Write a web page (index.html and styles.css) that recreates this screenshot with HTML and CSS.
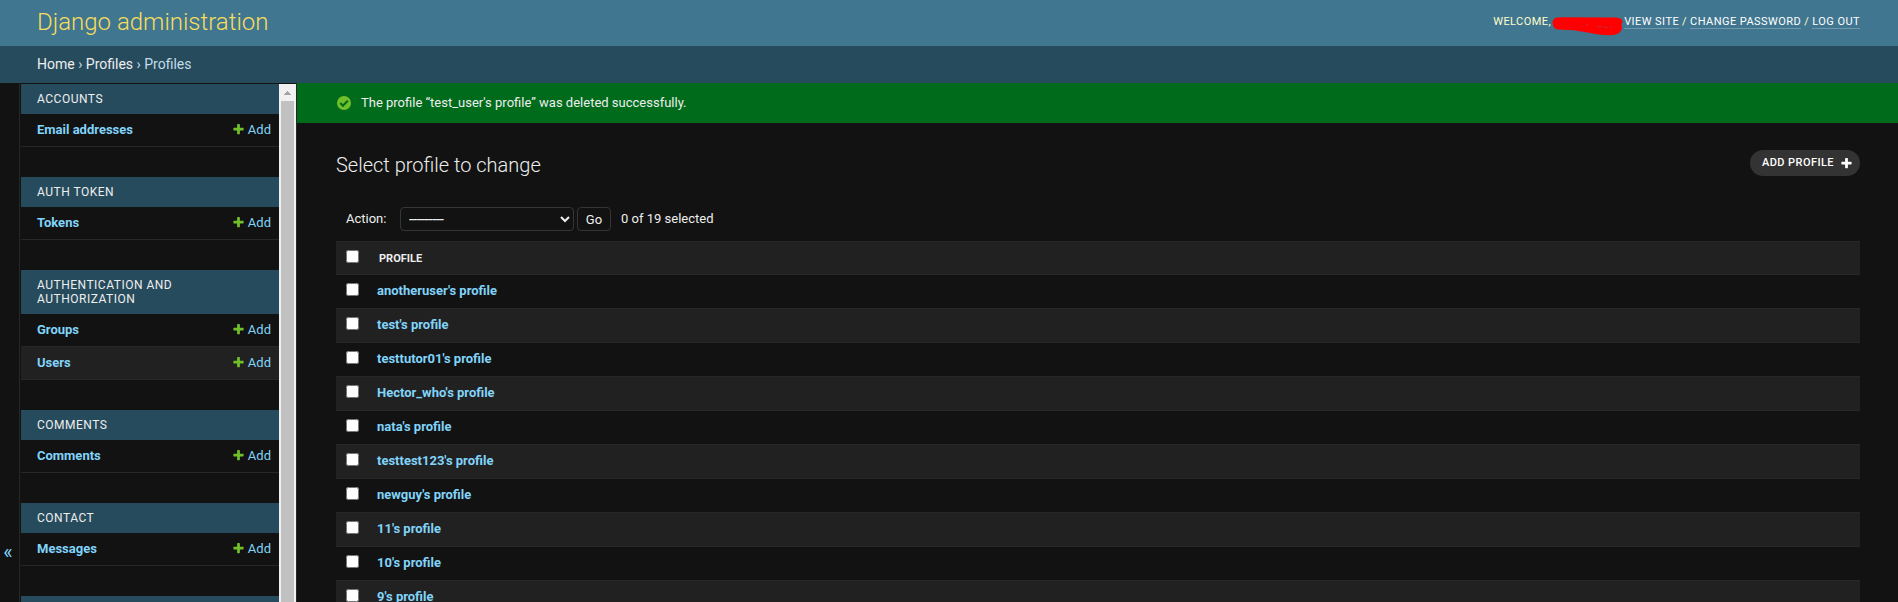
FILE: index.html
```
<!DOCTYPE html>
<html lang="en">
<head>
<meta charset="utf-8">
<title>Select profile to change | Django administration</title>
<link rel="stylesheet" href="styles.css">
</head>
<body>
<svg class="defs" width="0" height="0" aria-hidden="true">
  <symbol id="plus" viewBox="0 0 1792 1792"><path d="M1600 736v192q0 40-28 68t-68 28h-416v416q0 40-28 68t-68 28h-192q-40 0-68-28t-28-68v-416h-416q-40 0-68-28t-28-68v-192q0-40 28-68t68-28h416v-416q0-40 28-68t68-28h192q40 0 68 28t28 68v416h416q40 0 68 28t28 68z"/></symbol>
</svg>
<header class="header">
  <h1 class="brand">Django administration</h1>
  <div class="user-tools">
    <span>WELCOME,</span>
    <svg class="redacted" width="71" height="19" viewBox="0 0 71 19"><path fill="#f00" d="M3 1.2Q5 .2 10 .3L64 .4Q71 1 70.5 5Q69 7.500 70 10Q70.500 17 60 18.200Q50 18.500 38 16L22 13.200L6 12.500Q2 12 1 8Q-.5 3 3 1.200Z"/><path stroke="#a83c48" stroke-width=".8" fill="none" d="M34 7.700h2M45 9.500l5 .3m2 .4h4m2-.2h2"/></svg>
    <a>VIEW SITE</a> <span>/</span> <a>CHANGE PASSWORD</a> <span>/</span> <a>LOG OUT</a>
  </div>
</header>
<nav class="breadcrumbs"><a>Home</a> › <a>Profiles</a> › Profiles</nav>
<div class="main">
  <button class="toggle" aria-label="Toggle navigation">«</button>
  <nav class="sidebar">
    <div class="modules">
      <section class="module"><h2>ACCOUNTS</h2>
        <div class="model"><b>Email addresses</b><a><svg><use href="#plus"/></svg>Add</a></div></section>
      <section class="module"><h2>AUTH TOKEN</h2>
        <div class="model"><b>Tokens</b><a><svg><use href="#plus"/></svg>Add</a></div></section>
      <section class="module"><h2>AUTHENTICATION AND<br>AUTHORIZATION</h2>
        <div class="model"><b>Groups</b><a><svg><use href="#plus"/></svg>Add</a></div>
        <div class="model"><b>Users</b><a><svg><use href="#plus"/></svg>Add</a></div></section>
      <section class="module"><h2>COMMENTS</h2>
        <div class="model"><b>Comments</b><a><svg><use href="#plus"/></svg>Add</a></div></section>
      <section class="module"><h2>CONTACT</h2>
        <div class="model"><b>Messages</b><a><svg><use href="#plus"/></svg>Add</a></div></section>
      <section class="module"><h2></h2></section>
    </div>
    <div class="scrollbar">
      <svg width="17" height="17" shape-rendering="crispEdges"><path fill="#a3a3a3" d="M8 7h1v1h1v1h1v1h1v1H5v-1h1V9h1V8h1z"/></svg>
      <div class="thumb"></div>
    </div>
  </nav>
  <div class="content">
    <div class="success"><svg width="14" height="14" viewBox="0 0 14 14"><circle cx="7" cy="7" r="7" fill="#70bf2b"/><path d="M3.300 7.100l2.600 2.600 4.900-4.900" fill="none" stroke="#006b1b" stroke-width="2.100"/></svg><span>The profile “test_user's profile” was deleted successfully.</span></div>
    <div class="page">
      <div class="title-row"><h2>Select profile to change</h2><a class="add">ADD PROFILE<svg><use href="#plus"/></svg></a></div>
      <div class="actions">
        <label for="action">Action:</label>
        <select id="action"><option>---------</option></select>
        <button>Go</button>
        <span>0 of 19 selected</span>
      </div>
      <div class="results">
        <div class="row head"><input type="checkbox"><span>PROFILE</span></div>
        <div class="row"><input type="checkbox"><a>anotheruser's profile</a></div>
        <div class="row"><input type="checkbox"><a>test's profile</a></div>
        <div class="row"><input type="checkbox"><a>testtutor01's profile</a></div>
        <div class="row"><input type="checkbox"><a>Hector_who's profile</a></div>
        <div class="row"><input type="checkbox"><a>nata's profile</a></div>
        <div class="row"><input type="checkbox"><a>testtest123's profile</a></div>
        <div class="row"><input type="checkbox"><a>newguy's profile</a></div>
        <div class="row"><input type="checkbox"><a>11's profile</a></div>
        <div class="row"><input type="checkbox"><a>10's profile</a></div>
        <div class="row"><input type="checkbox"><a>9's profile</a></div>
      </div>
    </div>
  </div>
</div>
</body>
</html>
```
FILE: styles.css
```
:root {
  --primary: #264b5d;
  --body-bg: #121212;
  --body-fg: #eeeeee;
  --darkened: #212121;
  --hairline: #272727;
  --border: #353535;
  --link: #81d4fa;
}
* { box-sizing: border-box; }
body {
  margin: 0;
  height: 602px;
  display: flex;
  flex-direction: column;
  overflow: hidden;
  background: var(--body-bg);
  color: var(--body-fg);
  font: 13px/17px Roboto, "Liberation Sans", sans-serif;
}
h1, h2 { margin: 0; }
.defs { position: absolute; }
.header {
  flex: none;
  height: 46px;
  padding: 0 38px 3px 37px;
  display: flex;
  align-items: center;
  justify-content: space-between;
  background: #417690;
  color: #ffffcc;
}
.brand { padding-top: 1px; font-size: 24px; line-height: 28px; font-weight: 300; color: #f5dd5d; }
.user-tools {
  display: flex;
  align-items: flex-start;
  gap: 3px;
  height: 13px;
  font-size: 11px;
  line-height: 13px;
  letter-spacing: 0.45px;
}
.user-tools a { height: 14px; color: #fff; border-bottom: 1px solid rgba(255, 255, 255, 0.25); }
.redacted { flex: none; margin: 2px -2px 0 -2px; }
.breadcrumbs {
  flex: none;
  height: 37px;
  padding: 10px 37px;
  background: var(--primary);
  color: #c4dce8;
  font-size: 14px;
}
.breadcrumbs a { color: #eee; }
.main { flex: 1; min-height: 0; display: flex; }
.toggle {
  flex: none;
  width: 20px;
  padding: 418px 3px 0 0;
  border: 0;
  border-right: 1px solid var(--hairline);
  background: none;
  color: var(--link);
  font: 20px Roboto, sans-serif;
}
.sidebar {
  flex: none;
  width: 277px;
  padding: 1px 0 0 1px;
  display: flex;
  overflow: hidden;
  border-right: 1px solid var(--hairline);
}
.modules { width: 258px; }
.module { margin-bottom: 30px; }
.module h2 {
  min-height: 30px;
  padding: 8px 16px;
  background: var(--primary);
  font-size: 12px;
  line-height: 14px;
  font-weight: 400;
  letter-spacing: 0.5px;
}
.model {
  height: 33px;
  padding: 0 8px 2px 16px;
  display: flex;
  align-items: center;
  justify-content: space-between;
  border-bottom: 1px solid var(--hairline);
  color: var(--link);
}
.model:nth-of-type(even) { background: var(--darkened); }
.model b { font-weight: 700; }
.model a { display: flex; align-items: center; gap: 3px; }
.model svg { width: 13px; height: 13px; fill: #70bf2b; }
.scrollbar {
  flex: none;
  width: 17px;
  height: 518px;
  display: flex;
  flex-direction: column;
  background: #f1f1f1;
}
.scrollbar svg { display: block; }
.thumb { flex: 1; margin: 0 2px; background: #c1c1c1; }
.content { flex: 1; min-width: 0; }
.success {
  height: 40px;
  padding: 0 40px;
  display: flex;
  align-items: center;
  gap: 10px;
  background: #006b1b;
}
.success span { padding-bottom: 2px; }
.page { padding: 24px 38px 0 39px; }
.title-row { display: flex; justify-content: space-between; height: 56px; }
.title-row h2 { padding-top: 6px; font-size: 20px; line-height: 24px; font-weight: 300; }
.add {
  margin-top: 3px;
  width: 110px;
  height: 26px;
  padding: 0 7px 2px 12px;
  display: flex;
  align-items: center;
  justify-content: space-between;
  border-radius: 15px;
  background: #333;
  color: #fff;
  font-size: 11px;
  font-weight: 500;
  letter-spacing: 0.43px;
}
.add svg { width: 13px; height: 13px; fill: #fff; margin-top: 2px; }
.actions { display: flex; align-items: center; height: 38px; padding: 0 10px 6px; }
.actions label { width: 54px; }
.actions label, .actions span { padding-bottom: 1px; }
.actions select {
  width: 174px;
  height: 24px;
  padding: 0 4px;
  border: 1px solid var(--border);
  border-radius: 4px;
  background: var(--body-bg);
  color: var(--body-fg);
  font: 16px Roboto, sans-serif;
  letter-spacing: -0.6px;
}
.actions button {
  width: 34px;
  height: 24px;
  margin: 0 10px 0 3px;
  padding: 1px 0 0;
  border: 1px solid var(--border);
  border-radius: 4px;
  background: var(--body-bg);
  color: var(--body-fg);
  font: 13px Roboto, sans-serif;
}
.results { border-top: 1px solid var(--hairline); }
.row {
  height: 34px;
  padding: 8px 10px;
  display: flex;
  align-items: flex-start;
  gap: 18px;
  border-bottom: 1px solid var(--hairline);
}
.row:nth-child(odd) { background: var(--darkened); }
.row input { width: 13px; height: 13px; margin: 0; }
.row a { margin-top: -1px; color: var(--link); font-weight: 700; }
.head { height: 33px; }
.head span { padding-left: 2px; font-size: 11px; font-weight: 700; }
```
